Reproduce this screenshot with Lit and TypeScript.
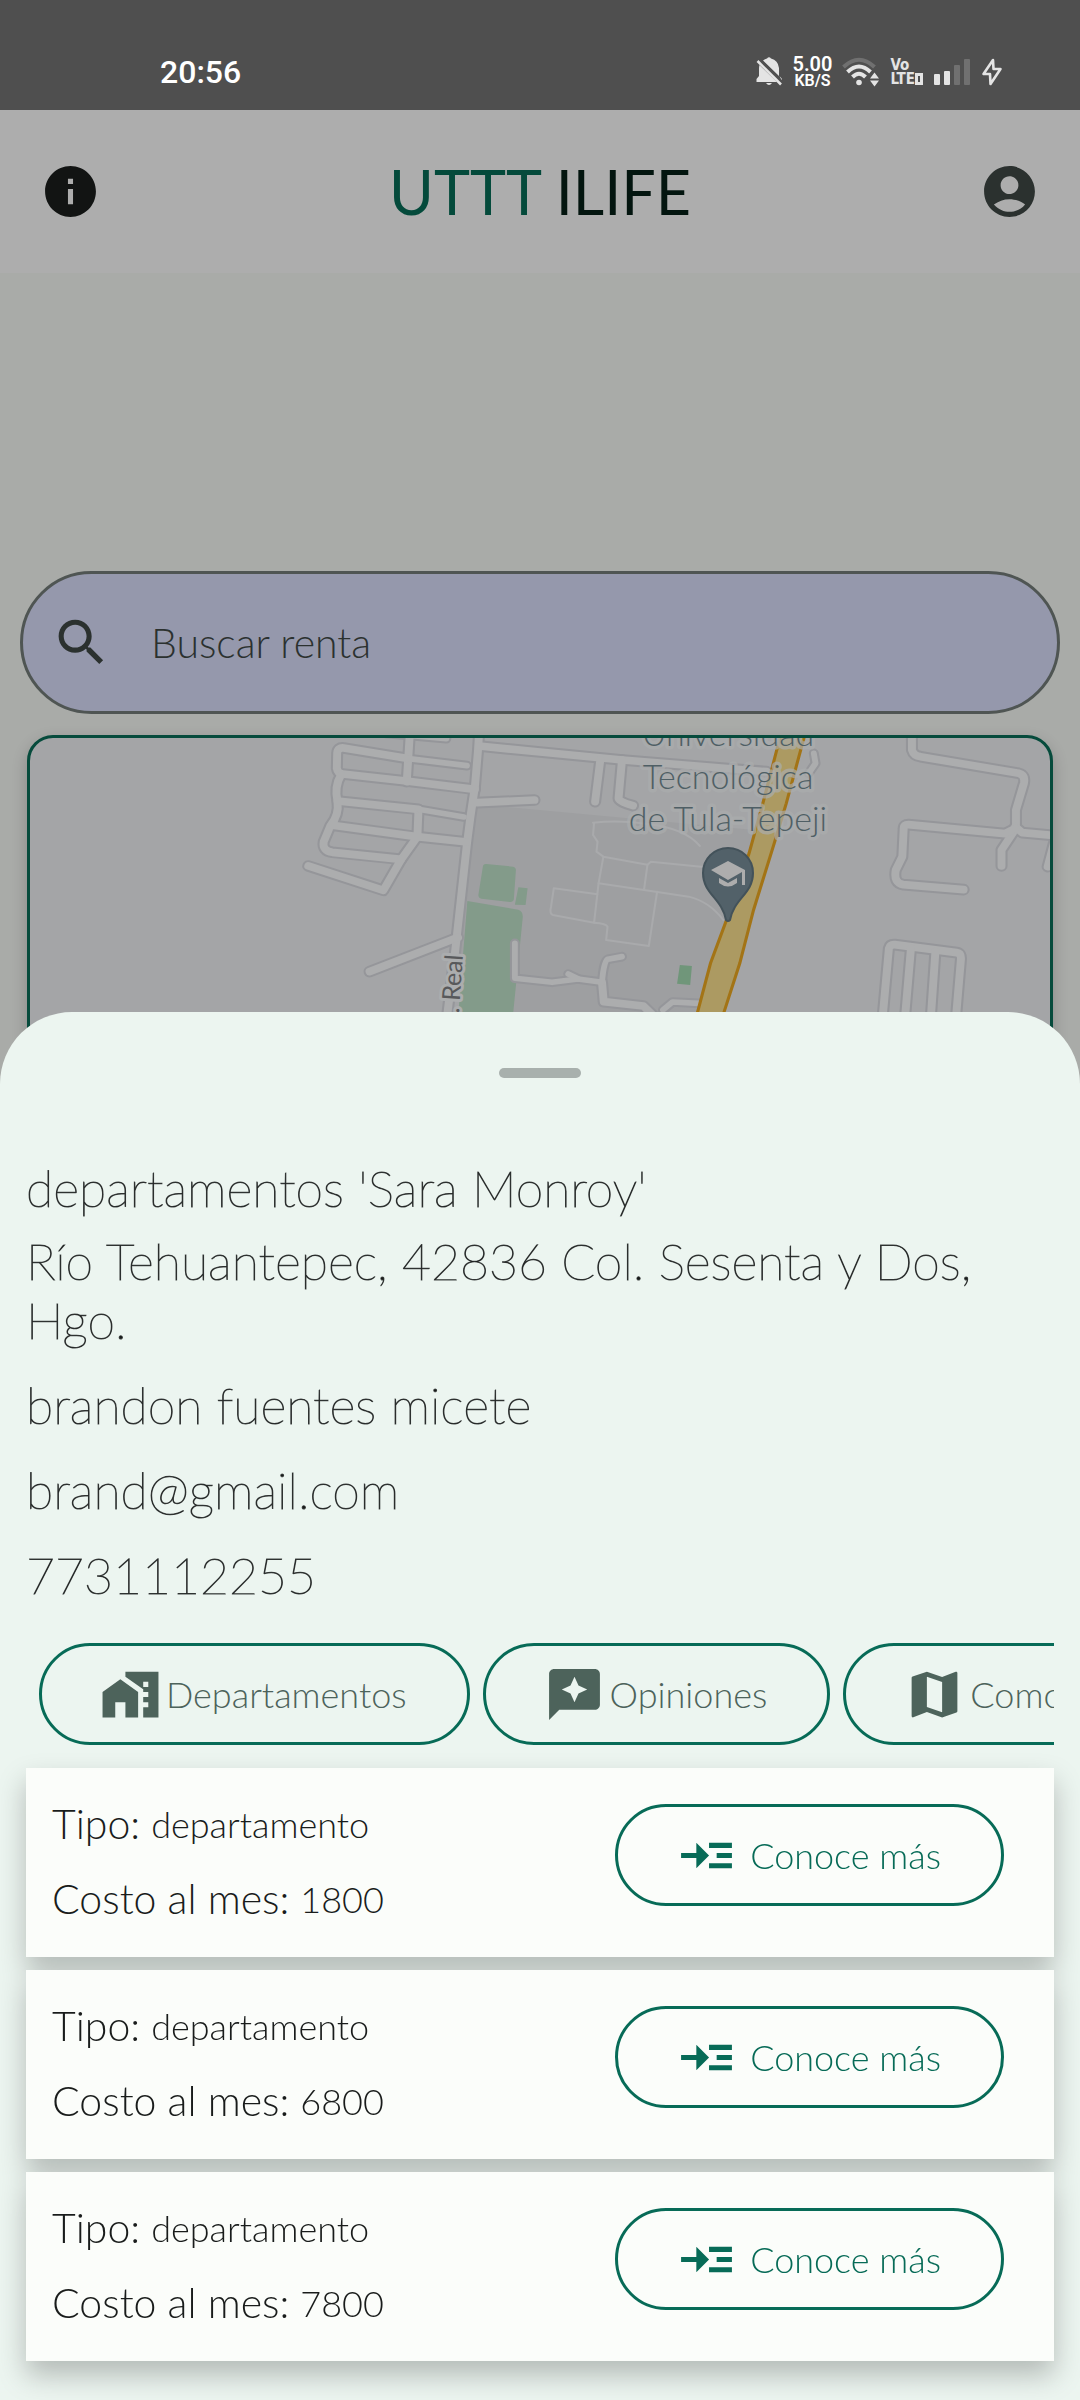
import { LitElement, html, svg, css } from "lit";
import { customElement, property, state } from "lit/decorators.js";

const ICONS = {
  info: "M12 2C6.48 2 2 6.48 2 12s4.48 10 10 10 10-4.48 10-10S17.52 2 12 2zm1 15h-2v-6h2v6zm0-8h-2V7h2v2z",
  account:
    "M12 2C6.48 2 2 6.48 2 12s4.48 10 10 10 10-4.48 10-10S17.52 2 12 2zm0 4c1.93 0 3.5 1.57 3.5 3.5S13.93 13 12 13s-3.5-1.57-3.5-3.5S10.07 6 12 6zm0 14c-2.03 0-4.43-.82-6.14-2.88C7.55 15.8 9.68 15 12 15s4.45.8 6.14 2.12C16.43 19.18 14.03 20 12 20z",
  search:
    "M15.5 14h-.79l-.28-.27C15.41 12.59 16 11.11 16 9.5 16 5.91 13.09 3 9.5 3S3 5.91 3 9.5 5.91 16 9.5 16c1.61 0 3.09-.59 4.23-1.57l.27.28v.79l5 4.99L20.49 19l-4.99-5zm-6 0C7.01 14 5 11.99 5 9.5S7.01 5 9.5 5 14 7.01 14 9.5 11.99 14 9.5 14z",
  homeWork:
    "M1 11v10h5v-6h4v6h5V11L8 6zM10 3v1.97l7 5V11h2v2h-2v2h2v2h-2v4h6V3H10zm9 6h-2V7h2v2z",
  reviews:
    "M20 2H4c-1.1 0-2 .9-2 2v18l4-4h14c1.1 0 2-.9 2-2V4c0-1.1-.9-2-2-2zm-6.43 9.57L12 15l-1.57-3.43L7 10l3.43-1.57L12 5l1.57 3.43L17 10l-3.43 1.57z",
  map: "M20.5 3l-.16.03L15 5.1 9 3 3.36 4.9c-.21.07-.36.25-.36.48V20.5c0 .28.22.5.5.5l.16-.03L9 18.9l6 2.1 5.64-1.9c.21-.07.36-.25.36-.48V3.5c0-.28-.22-.5-.5-.5zM15 19l-6-2.11V5l6 2.11V19z",
  readMore:
    "M22 7h-9v2h9V7zm0 8h-9v2h9v-2zm0-4h-6v2h6v-2zm-9 1L8 7v4H2v2h6v4l5-5z",
};

type IconName = keyof typeof ICONS;

@customElement("mat-icon")
export class MatIcon extends LitElement {
  static styles = css`
    :host {
      display: block;
      flex: none;
      width: 61px;
      height: 61px;
    }
    .glyph {
      display: block;
      width: 100%;
      height: 100%;
      fill: currentColor;
    }
  `;

  @property() name: IconName = "info";

  render() {
    return html`<svg class="glyph" viewBox="0 0 24 24" aria-hidden="true">
      <path d=${ICONS[this.name]}></path>
    </svg>`;
  }
}

@customElement("status-bar")
export class StatusBar extends LitElement {
  static styles = css`
    :host {
      display: block;
      background: #4f4f4f;
      color: #fff;
      font-family: Roboto, "Liberation Sans", sans-serif;
    }
    .bar {
      display: flex;
      justify-content: space-between;
      align-items: center;
      padding: 52px 77px 18px 160px;
      height: 40px;
    }
    .time {
      font-size: 32px;
      font-weight: 500;
    }
    .icons {
      display: flex;
      align-items: center;
      gap: 10px;
    }
    .rate {
      display: flex;
      flex-direction: column;
      align-items: center;
      font-weight: 600;
      font-size: 20px;
      line-height: 17px;
    }
    .unit {
      font-size: 16px;
      line-height: 15px;
    }
    .volte {
      display: flex;
      flex-direction: column;
      font-family: "Liberation Sans Narrow", "DejaVu Sans Condensed", sans-serif;
      font-weight: 700;
      font-size: 15px;
      line-height: 14px;
      color: #e4e4e4;
    }
    .lte {
      display: flex;
      align-items: center;
    }
    .pic {
      display: block;
      fill: #e4e4e4;
    }
    .faint {
      fill: #707070;
    }
    .wave {
      fill: none;
      stroke: #e4e4e4;
      stroke-width: 4;
    }
    .wave-faint {
      fill: none;
      stroke: #707070;
      stroke-width: 4;
    }
    .box {
      fill: none;
      stroke: #e4e4e4;
      stroke-width: 3;
    }
  `;

  render() {
    return html`<div class="bar">
      <span class="time">20:56</span>
      <div class="icons">
        <svg class="pic" width="26" height="30" viewBox="0 0 26 30" aria-hidden="true">
          <path d="M4 7 L22.500 25 H0.500 V22 L3 19 V11 Q3 9 4 7z"></path>
          <path d="M7 3.500 Q9 2 11 1.500 Q13 -0.800 15 1.500 Q22 3 23 11 V19z"></path>
          <path d="M10 26 h6 q-3 4 -6 0z"></path>
          <path d="M23.500 19 l2.500 3 v3 z"></path>
          <path d="M2.500 3.500 L25.500 26" stroke="#4f4f4f" stroke-width="5"></path>
          <path d="M1.500 4 L25 27.500" stroke="#e4e4e4" stroke-width="2.600"></path>
        </svg>
        <div class="rate"><span>5.00</span><span class="unit">KB/S</span></div>
        <svg class="pic" width="38" height="30" viewBox="0 0 38 30" aria-hidden="true">
          <path class="wave-faint" d="M1.500 10 Q17 -4.500 32.500 10"></path>
          <path class="wave" d="M5.500 15 Q17 4 28.500 15"></path>
          <path class="wave" d="M10.500 20 Q17 13.500 23.500 20"></path>
          <circle cx="17" cy="25.500" r="2.800"></circle>
          <path d="M32.500 15.500 l4.500 6 h-9z M32.500 29.500 l4.500 -6 h-9z"></path>
        </svg>
        <div class="volte">
          <span>Vo</span>
          <span class="lte"
            >LTE<svg class="pic" width="8" height="12" viewBox="0 0 8 12" aria-hidden="true">
              <path class="box" d="M1.500 1.500 h5 v9 h-5z"></path></svg
          ></span>
        </div>
        <svg class="pic" width="38" height="28" viewBox="0 0 38 28" aria-hidden="true">
          <rect x="1" y="16" width="6" height="11" rx="1"></rect>
          <rect x="11" y="13" width="6" height="14" rx="1"></rect>
          <rect class="faint" x="21" y="7" width="6" height="20" rx="1"></rect>
          <rect class="faint" x="31" y="1" width="6" height="26" rx="1"></rect>
        </svg>
        <svg class="pic" width="22" height="30" viewBox="0 0 22 30" aria-hidden="true">
          <path
            d="M12 3 L2.500 17 H9 L9.500 27 L19.500 12 H12.500z"
            fill="none"
            stroke="#e4e4e4"
            stroke-width="2.600"
            stroke-linejoin="round"
          ></path>
        </svg>
      </div>
    </div>`;
  }
}

const ROADS = [
  "M1190 40 L1181 185",
  "M1391 40 L1388 90 L1379 200 L1366 290 L1356 370 L1322 690 L1298 890",
  "M1180 115 L998 84 Q980 82 979 100 L978 145 Q980 160 995 162 L1180 183 L1379 208",
  "M990 165 Q970 200 980 245 Q985 285 960 316 L940 365 Q935 392 965 397 L1165 418 L1212 350 L1215 270",
  "M980 243 L1215 268",
  "M965 316 L1210 350 L1356 366",
  "M1165 418 L1113 511 L895 438",
  "M1073 755 L1330 652",
  "M1385 248 L1552 240",
  "M1391 78 L1568 96 L1808 120 L2225 155",
  "M1806 120 L1796 235 Q1796 245 1838 257",
  "M2648 40 V90 Q2653 108 2673 110 L2958 160 Q2978 165 2973 190 L2950 270 V325 L2908 390 V438",
  "M2948 320 L2968 338 L3070 347",
  "M2948 325 L2918 341 L2638 314 Q2624 314 2624 325 L2620 410 L2601 450 Q2594 490 2623 494 L2798 509",
  "M3060 370 L3042 440",
  "M2563 890 L2581 685 Q2584 673 2598 674 L2778 698 Q2792 700 2790 720 L2776 890",
  "M2645 685 L2628 890",
  "M2716 695 L2703 890",
  "M1743 120 L1728 245",
  "M1748 787 L1753 845 L1868 858 L1905 895",
];

const LANES = [
  "M1120 40 L1296 56",
  "M1180 115 L1356 137",
  "M1215 268 L1347 291",
  "M1495 670 V775 L1603 787 L1678 777 L1748 787",
  "M1650 762 L1680 777",
  "M1806 710 L1765 718 Q1753 722 1748 787",
  "M1925 870 L1953 846 L2030 850",
  "M2363 100 L2368 130 L2348 160",
];

const PATHS = [
  "M1722 308 Q1800 300 1880 312 Q1990 325 2032 378",
  "M1725 308 L1722 345 L1735 365 L1732 395 L1752 410 L1880 434 L1890 425 L2050 442",
  "M1752 410 L1738 490 L1725 608 L1605 585 Q1595 580 1600 560 L1608 505 L1735 523",
  "M1738 490 L1870 510 L1880 434",
  "M1870 510 L2000 530 Q2060 545 2100 600",
  "M1908 515 L1884 678 L1760 660 L1764 620 Q1760 610 1725 608",
];

@customElement("campus-map")
export class CampusMap extends LitElement {
  static styles = css`
    :host {
      display: block;
      background: #a4a5a7;
    }
    .canvas {
      display: block;
      width: 100%;
    }
    .case,
    .road,
    .lane-case,
    .lane,
    .path {
      fill: none;
      stroke-linejoin: round;
      stroke-linecap: round;
    }
    .case {
      stroke: #95969a;
      stroke-width: 35;
    }
    .road {
      stroke: #acadae;
      stroke-width: 23;
    }
    .lane-case {
      stroke: #95969a;
      stroke-width: 29;
    }
    .lane {
      stroke: #acadae;
      stroke-width: 17;
    }
    .path {
      stroke: #a9aaac;
      stroke-width: 6;
    }
    .campus {
      fill: #9e9fa1;
    }
    .park {
      fill: #839b8a;
    }
    .park-dark {
      fill: #70967a;
    }
    .highway {
      fill: #ac9a62;
    }
    .edge {
      fill: none;
      stroke: #a37416;
      stroke-width: 9;
    }
    .label {
      font-family: Lato, "Open Sans", sans-serif;
      font-weight: 300;
      font-size: 34px;
      text-anchor: middle;
      fill: #4f5f65;
      stroke: #abadae;
      stroke-width: 7;
      stroke-opacity: 0.7;
      stroke-linejoin: round;
      paint-order: stroke;
    }
    .street {
      font-family: Lato, "Open Sans", sans-serif;
      font-weight: 400;
      font-size: 25px;
      text-anchor: end;
      fill: #58595b;
      stroke: #abadae;
      stroke-width: 6;
      stroke-linejoin: round;
      paint-order: stroke;
    }
    .pin {
      fill: #526169;
      stroke: #43525a;
      stroke-width: 2;
    }
    .cap {
      fill: #adadad;
    }
  `;

  render() {
    const draw = (paths: string[], cls: string) =>
      paths.map((d) => svg`<path class=${cls} d=${d}></path>`);
    return html`<svg
      class="canvas"
      viewBox="0 0 1020 400"
      role="img"
      aria-label="Universidad Tecnológica de Tula-Tepeji"
    >
      <g transform="translate(-30 -18) scale(0.3444 0.3333)">
        <path
          class="campus"
          d="M1385 262 L1480 262 L1880 300 L2190 330 L2170 480 L2030 880 L1350 880 L1320 640z"
        ></path>
        <path class="park" d="M1402 440 Q1403 431 1412 432 L1490 440 Q1498 442 1498 450 L1492 538 Q1490 547 1480 546 L1398 536 Q1389 534 1389 525z"></path>
        <path class="park" d="M1505 502 L1532 505 L1526 555 L1495 554z"></path>
        <path class="park" d="M1357 543 L1505 569 Q1518 573 1518 590 L1489 890 L1330 890z"></path>
        <path class="park-dark" d="M1974 735 L2009 738 L2004 795 L1966 791z"></path>
        ${draw(PATHS, "path")} ${draw(LANES, "lane-case")} ${draw(ROADS, "case")}
        ${draw(ROADS, "road")} ${draw(LANES, "lane")}
        <path
          class="highway"
          d="M2266 40 L2213 250 L2173 400 L2113 590 L2063 730 L2020 890 L2098 890 L2148 730 L2188 570 L2248 370 L2283 250 L2338 40z"
        ></path>
        <path class="edge" d="M2268 40 L2215 250 L2175 400 L2113 590 L2063 730 L2022 890"></path>
        <path class="edge" d="M2338 40 L2283 250 L2248 370 L2188 570 L2148 730 L2098 890"></path>
      </g>
      <text class="label" x="698" y="8">Universidad</text>
      <text class="label" x="698" y="51">Tecnológica</text>
      <text class="label" x="698" y="93">de Tula-Tepeji</text>
      <text class="street" transform="translate(433 217) rotate(-86)">. Real</text>
      <path
        class="pin"
        d="M698 110 C712 110 723 121 723 135 C723 156 704 160 700 182 Q698 184 696 182 C692 160 673 156 673 135 C673 121 684 110 698 110z"
      ></path>
      <path class="cap" d="M681 132 L698 123 L715 132 V147 H712 V134 L698 142z"></path>
      <path class="cap" d="M689 140 L698 145 L707 140 V145 Q698 152 689 145z"></path>
    </svg>`;
  }
}

interface Rental {
  type: string;
  cost: number;
}

@customElement("app-root")
export class AppRoot extends LitElement {
  static styles = css`
    :host {
      display: block;
      font-family: Lato, "Open Sans", sans-serif;
      font-weight: 300;
      color: #191c1b;
    }
    .app {
      display: grid;
      min-height: 100vh;
      grid-template-columns: minmax(0, 1fr);
    }
    .screen,
    .sheet {
      grid-area: 1 / 1;
    }
    .screen {
      display: flex;
      flex-direction: column;
      background: #a9aba8;
    }
    .header {
      display: flex;
      align-items: center;
      justify-content: space-between;
      padding: 51px 40px;
      background: #adadad;
    }
    .icon-button {
      display: block;
      padding: 0;
      border: 0;
      background: none;
      color: #2b312f;
    }
    .info {
      color: #121413;
    }
    .title {
      margin: 0;
      font-weight: 400;
      font-size: 61px;
      line-height: 58px;
      color: #03150f;
    }
    .brand {
      color: #044a3b;
    }
    .search {
      display: flex;
      align-items: center;
      gap: 39px;
      margin: 298px 20px 0;
      padding: 38px 28px;
      border: 3px solid #4f5553;
      border-radius: 72px;
      background: #9598ac;
      color: #2b312f;
    }
    .search-input {
      flex: 1;
      min-width: 0;
      padding: 0;
      border: 0;
      outline: 0;
      background: none;
      font: inherit;
      font-size: 41px;
      line-height: 61px;
      color: inherit;
    }
    .search-input::placeholder {
      color: #2b312f;
      opacity: 1;
    }
    .map-card {
      flex: 1;
      margin: 21px 27px 0;
      border: 3px solid #064b3c;
      border-radius: 26px;
      overflow: hidden;
      box-shadow: 0 6px 16px rgba(0, 0, 0, 0.2);
    }
    .sheet {
      position: relative;
      align-self: end;
      display: flex;
      flex-direction: column;
      padding: 56px 26px 39px;
      border-radius: 72px 72px 0 0;
      background: #ecf5f0;
    }
    .handle {
      align-self: center;
      width: 82px;
      height: 10px;
      border-radius: 5px;
      background: #a8b0ad;
    }
    .details {
      display: flex;
      flex-direction: column;
      gap: 26px;
      margin-top: 81px;
      font-size: 50px;
      line-height: 59px;
      font-weight: 100;
      -webkit-text-stroke: 1px rgba(25, 28, 27, 0.8);
    }
    .place {
      display: flex;
      flex-direction: column;
      gap: 14px;
    }
    .name,
    .line {
      margin: 0;
      font: inherit;
    }
    .chips {
      display: flex;
      gap: 13px;
      margin-top: 38px;
      padding-left: 13px;
      overflow-x: auto;
      scrollbar-width: none;
    }
    .pill {
      display: flex;
      flex: none;
      align-items: center;
      height: 102px;
      box-sizing: border-box;
      border: 3px solid #076b57;
      border-radius: 51px;
      background: none;
      font: inherit;
      font-size: 36px;
      white-space: nowrap;
    }
    .chip {
      gap: 5px;
      padding: 0 60px 0 58px;
      color: #4d635b;
    }
    .more {
      gap: 13px;
      padding: 0 60px 0 58px;
      color: #076b57;
    }
    .list {
      display: flex;
      flex-direction: column;
      gap: 13px;
      margin: 23px 0 0;
      padding: 0;
      list-style: none;
      filter: drop-shadow(0 14px 14px rgba(0, 0, 0, 0.24));
    }
    .card {
      display: flex;
      justify-content: space-between;
      align-items: center;
      padding: 32px 50px 34px 26px;
      background: #fbfdfa;
    }
    .facts {
      display: flex;
      flex-direction: column;
      gap: 27px;
      margin: 0;
    }
    .more {
      margin-bottom: 13px;
    }
    .fact {
      display: flex;
      gap: 11px;
      font-size: 41px;
      line-height: 48px;
    }
    .value {
      margin: 0;
      font-size: 36px;
    }
  `;

  @state() private query = "";

  private rentals: Rental[] = [
    { type: "departamento", cost: 1800 },
    { type: "departamento", cost: 6800 },
    { type: "departamento", cost: 7800 },
  ];

  private sections: { icon: IconName; label: string }[] = [
    { icon: "homeWork", label: "Departamentos" },
    { icon: "reviews", label: "Opiniones" },
    { icon: "map", label: "Como llegar" },
  ];

  private onSearch(event: Event) {
    this.query = (event.target as HTMLInputElement).value;
  }

  render() {
    return html`<div class="app">
      <div class="screen">
        <status-bar></status-bar>
        <header class="header">
          <button class="icon-button info" aria-label="Información">
            <mat-icon name="info"></mat-icon>
          </button>
          <h1 class="title"><span class="brand">UTTT</span> ILIFE</h1>
          <button class="icon-button" aria-label="Perfil">
            <mat-icon name="account"></mat-icon>
          </button>
        </header>
        <label class="search">
          <mat-icon name="search"></mat-icon>
          <input
            class="search-input"
            type="text"
            placeholder="Buscar renta"
            aria-label="Buscar renta"
            .value=${this.query}
            @input=${this.onSearch}
          />
        </label>
        <campus-map class="map-card"></campus-map>
      </div>
      <section class="sheet">
        <div class="handle"></div>
        <div class="details">
          <div class="place">
            <h2 class="name">departamentos 'Sara Monroy'</h2>
            <p class="line">Río Tehuantepec, 42836 Col. Sesenta y Dos, Hgo.</p>
          </div>
          <p class="line">brandon fuentes micete</p>
          <p class="line">brand@gmail.com</p>
          <p class="line">7731112255</p>
        </div>
        <nav class="chips">
          ${this.sections.map(
            (s) => html`<button class="pill chip">
              <mat-icon name=${s.icon}></mat-icon>${s.label}
            </button>`
          )}
        </nav>
        <ul class="list">
          ${this.rentals.map(
            (r) => html`<li class="card">
              <dl class="facts">
                <div class="fact">
                  <dt>Tipo:</dt>
                  <dd class="value">${r.type}</dd>
                </div>
                <div class="fact">
                  <dt>Costo al mes:</dt>
                  <dd class="value">${r.cost}</dd>
                </div>
              </dl>
              <button class="pill more">
                <mat-icon name="readMore"></mat-icon>Conoce más
              </button>
            </li>`
          )}
        </ul>
      </section>
    </div>`;
  }
}
